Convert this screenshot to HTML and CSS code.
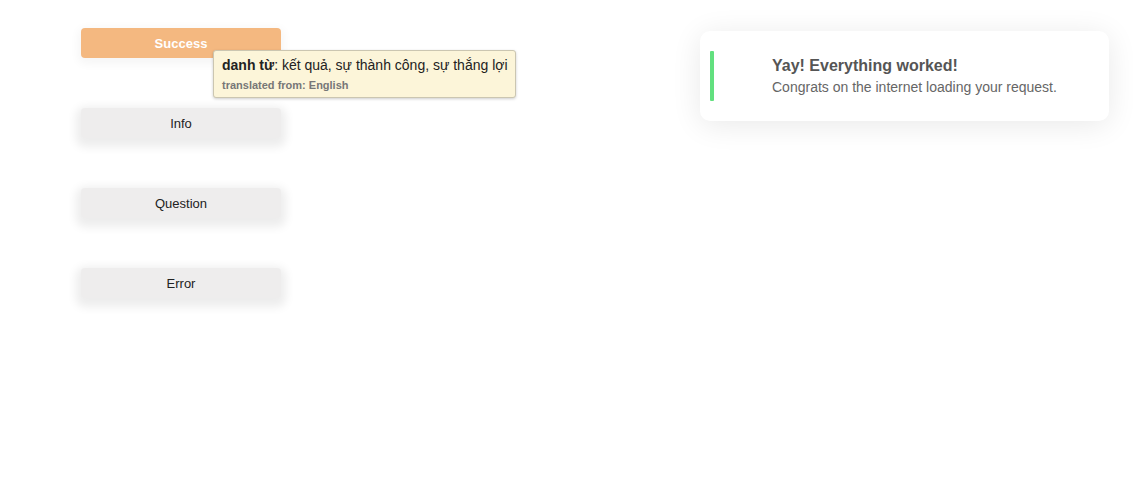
FILE: index.html
```html
<!DOCTYPE html>
<html lang="en">
<head>
<meta charset="utf-8">
<title>Toasts</title>
<link rel="stylesheet" href="styles.css">
</head>
<body>
<div class="page">
  <div class="buttons">
    <div class="btn-wrap">
      <button class="btn btn-success">Success</button>
      <div class="tooltip">
        <div class="tt-main"><b>danh từ</b>: kết quả, sự thành công, sự thắng lợi</div>
        <div class="tt-sub">translated from: English</div>
      </div>
    </div>
    <div class="btn-wrap"><button class="btn">Info</button></div>
    <div class="btn-wrap"><button class="btn">Question</button></div>
    <div class="btn-wrap"><button class="btn">Error</button></div>
  </div>
  <div class="toast">
    <div class="toast-bar"></div>
    <div class="toast-text">
      <div class="toast-title">Yay! Everything worked!</div>
      <div class="toast-msg">Congrats on the internet loading your request.</div>
    </div>
  </div>
</div>
</body>
</html>
```
FILE: styles.css
```css
html, body {
  margin: 0;
  padding: 0;
  background: #ffffff;
  font-family: "Liberation Sans", Arial, sans-serif;
}
.page {
  display: flex;
  align-items: flex-start;
  width: 1133px;
  height: 504px;
  box-sizing: border-box;
}
.buttons {
  display: flex;
  flex-direction: column;
  gap: 50px;
  padding: 28px 0 0 81px;
}
.btn-wrap {
  position: relative;
  width: 200px;
  height: 30px;
}
.btn {
  display: block;
  width: 200px;
  height: 30px;
  margin: 0;
  padding: 0;
  border: none;
  border-radius: 4px;
  background: #eeeded;
  color: #222;
  font-family: "Liberation Sans", Arial, sans-serif;
  font-size: 13px;
  box-shadow: 0 4px 10px 5px rgba(0, 0, 0, 0.075);
}
.btn-success {
  background: #f4b880;
  color: #ffffff;
  font-weight: bold;
  box-shadow: 0 3px 10px 3px rgba(0, 0, 0, 0.04);
}
.tooltip {
  position: absolute;
  left: 132px;
  top: 22px;
  width: 303px;
  height: 48px;
  box-sizing: border-box;
  padding: 6px 0 0 8px;
  background: #fcf5d9;
  border: 1px solid #cbc6b1;
  border-radius: 3px;
  box-shadow: 0 1px 3px rgba(0, 0, 0, 0.2);
  z-index: 2;
  white-space: nowrap;
}
.tt-main {
  font-size: 14px;
  line-height: 17px;
  color: #222;
}
.tt-sub {
  margin-top: 5px;
  font-size: 11px;
  line-height: 13px;
  font-weight: bold;
  color: #777;
}
.toast {
  display: flex;
  align-items: center;
  margin: 31px 24px 0 auto;
  width: 409px;
  height: 90px;
  box-sizing: border-box;
  padding-left: 10px;
  background: #ffffff;
  border-radius: 10px;
  box-shadow: 0 4px 30px rgba(0, 0, 0, 0.09);
}
.toast-bar {
  width: 4px;
  height: 50px;
  background: #62e07f;
  border-radius: 1px;
}
.toast-text {
  margin-left: 58px;
  padding-bottom: 1px;
}
.toast-title {
  font-size: 16px;
  line-height: 20px;
  font-weight: bold;
  color: #555;
}
.toast-msg {
  margin-top: 3px;
  font-size: 14px;
  line-height: 17px;
  color: #666;
}
```
